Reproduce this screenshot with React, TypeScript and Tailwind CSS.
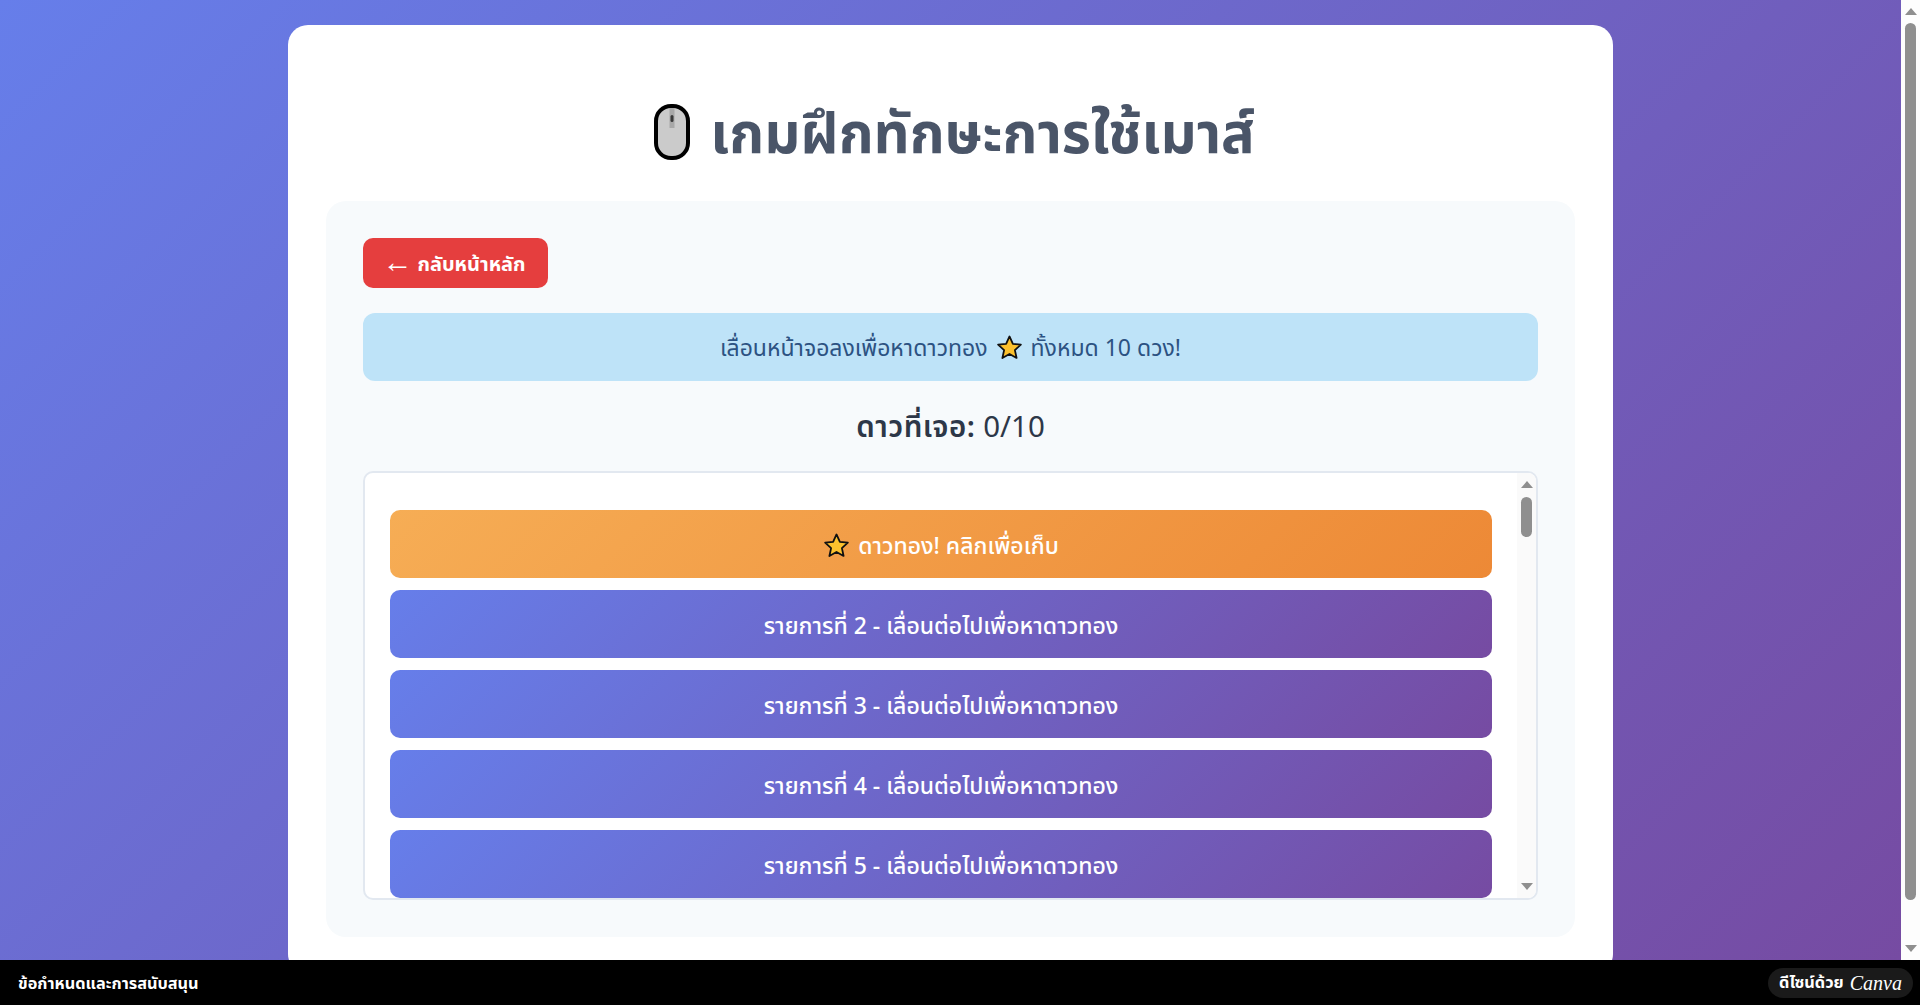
const font = { fontFamily: '"Noto Sans", "Noto Sans Thai", sans-serif' };

function Star({ size }: { size: number }) {
  return (
    <svg width={size} height={size} viewBox="0 0 24 24" className="inline-block shrink-0">
      <path
        d="M12 2.2l3 6.5 7.1.8-5.3 4.8 1.5 7-6.3-3.6-6.3 3.6 1.5-7L1.900 9.500 9 8.700z"
        fill="#fcc12d"
        stroke="#111"
        strokeWidth="1.6"
        strokeLinejoin="round"
      />
    </svg>
  );
}

function MouseIcon() {
  return (
    <svg width="36" height="56" viewBox="0 0 36 56" className="shrink-0 mt-[2px]">
      <rect x="2" y="2" width="32" height="52" rx="15" fill="#cbcbcb" stroke="#000" strokeWidth="4" />
      <rect x="15.500" y="4" width="5" height="20" fill="#a8a8a8" />
      <rect x="16.500" y="11" width="3" height="7" rx="1.500" fill="#3a3a3a" />
    </svg>
  );
}

function Arrow({ down }: { down?: boolean }) {
  return (
    <div
      className={
        down
          ? "w-0 h-0 border-x-[6.500px] border-x-transparent border-t-[7px] border-t-[#8f8f8f]"
          : "w-0 h-0 border-x-[6.500px] border-x-transparent border-b-[7px] border-b-[#8f8f8f]"
      }
    />
  );
}

export default function App() {
  const items = [2, 3, 4, 5];
  return (
    <div className="h-screen flex flex-col overflow-hidden" style={font}>
      <div className="flex-1 min-h-0 flex">
        <div className="flex-1 min-w-0 overflow-hidden pt-[25px] bg-[linear-gradient(135deg,#667eea_0%,#764ba2_100%)]">
          <div className="w-[1325px] mx-auto bg-white rounded-[20px] px-[38px] pt-[38px] pb-[37px]">
            <h1 className="flex items-center justify-center gap-[20px] h-[138px] pb-[2px] pl-[8px] text-[56px] leading-none font-bold text-[#4a5568]">
              <MouseIcon />
              เกมฝึกทักษะการใช้เมาส์
            </h1>
            <div className="bg-[#f7fafc] rounded-[20px] p-[37px]">
              <button className="flex items-center justify-center gap-[5px] h-[50px] w-[185px] pt-[1px] pr-[3px] rounded-[10px] bg-[#e53e3e] text-white font-bold text-[20px]">
                <span className="text-[30px] font-normal leading-none -mt-[5px]">←</span> กลับหน้าหลัก
              </button>
              <div className="mt-[25px] h-[68px] pt-[1px] rounded-[12px] bg-[#bee3f8] text-[#2c5282] text-[23px] flex items-center justify-center gap-[8px]">
                เลื่อนหน้าจอลงเพื่อหาดาวทอง <Star size={27} /> ทั้งหมด 10 ดวง!
              </div>
              <p className="mt-[25px] h-[41px] flex items-center justify-center text-[29.500px] text-[#2d3748]">
                <span className="font-semibold tracking-[0.500px]">ดาวที่เจอ:</span>&nbsp;0/10
              </p>
              <div className="mt-[24px] h-[429px] border-2 border-[#e2e8f0] rounded-[10px] bg-white flex overflow-hidden">
                <div className="flex-1 min-w-0 px-[25px] pt-[37px] flex flex-col gap-[12px]">
                  <div className="h-[68px] shrink-0 pt-[2px] rounded-[10px] bg-[linear-gradient(135deg,#f6ad55_0%,#ed8936_100%)] text-white text-[23px] font-medium flex items-center justify-center gap-[8px]">
                    <Star size={27} /> ดาวทอง! คลิกเพื่อเก็บ
                  </div>
                  {items.map((n) => (
                    <div
                      key={n}
                      className="h-[68px] shrink-0 pt-[2px] rounded-[10px] bg-[linear-gradient(135deg,#667eea_0%,#764ba2_100%)] text-white text-[23px] font-medium flex items-center justify-center"
                    >
                      รายการที่ {n} - เลื่อนต่อไปเพื่อหาดาวทอง
                    </div>
                  ))}
                </div>
                <div className="w-[19px] shrink-0 bg-[#fafafa] flex flex-col items-center pt-[8px] pb-[8px]">
                  <Arrow />
                  <div className="mt-[9px] w-[11px] h-[40px] rounded-full bg-[#8f8f8f]" />
                  <div className="mt-auto">
                    <Arrow down />
                  </div>
                </div>
              </div>
            </div>
          </div>
        </div>
        <div className="w-[19px] shrink-0 bg-[#fdfdfd] flex flex-col items-center pt-[8px] pb-[8px]">
          <Arrow />
          <div className="mt-[8px] w-[11px] h-[877px] rounded-full bg-[#8f8f8f]" />
          <div className="mt-auto">
            <Arrow down />
          </div>
        </div>
      </div>
      <footer className="h-[45px] shrink-0 bg-black flex items-center justify-between pl-[18px] pr-[7px] text-white text-[16.300px] font-bold">
        <span className="pt-[1px]">ข้อกำหนดและการสนับสนุน</span>
        <span className="h-[30px] w-[145px] rounded-full bg-[#1a1a1a] flex items-center justify-center gap-[6px]">
          ดีไซน์ด้วย
          <span className="text-[20px] italic font-normal" style={{ fontFamily: '"Liberation Serif", serif' }}>
            Canva
          </span>
        </span>
      </footer>
    </div>
  );
}
